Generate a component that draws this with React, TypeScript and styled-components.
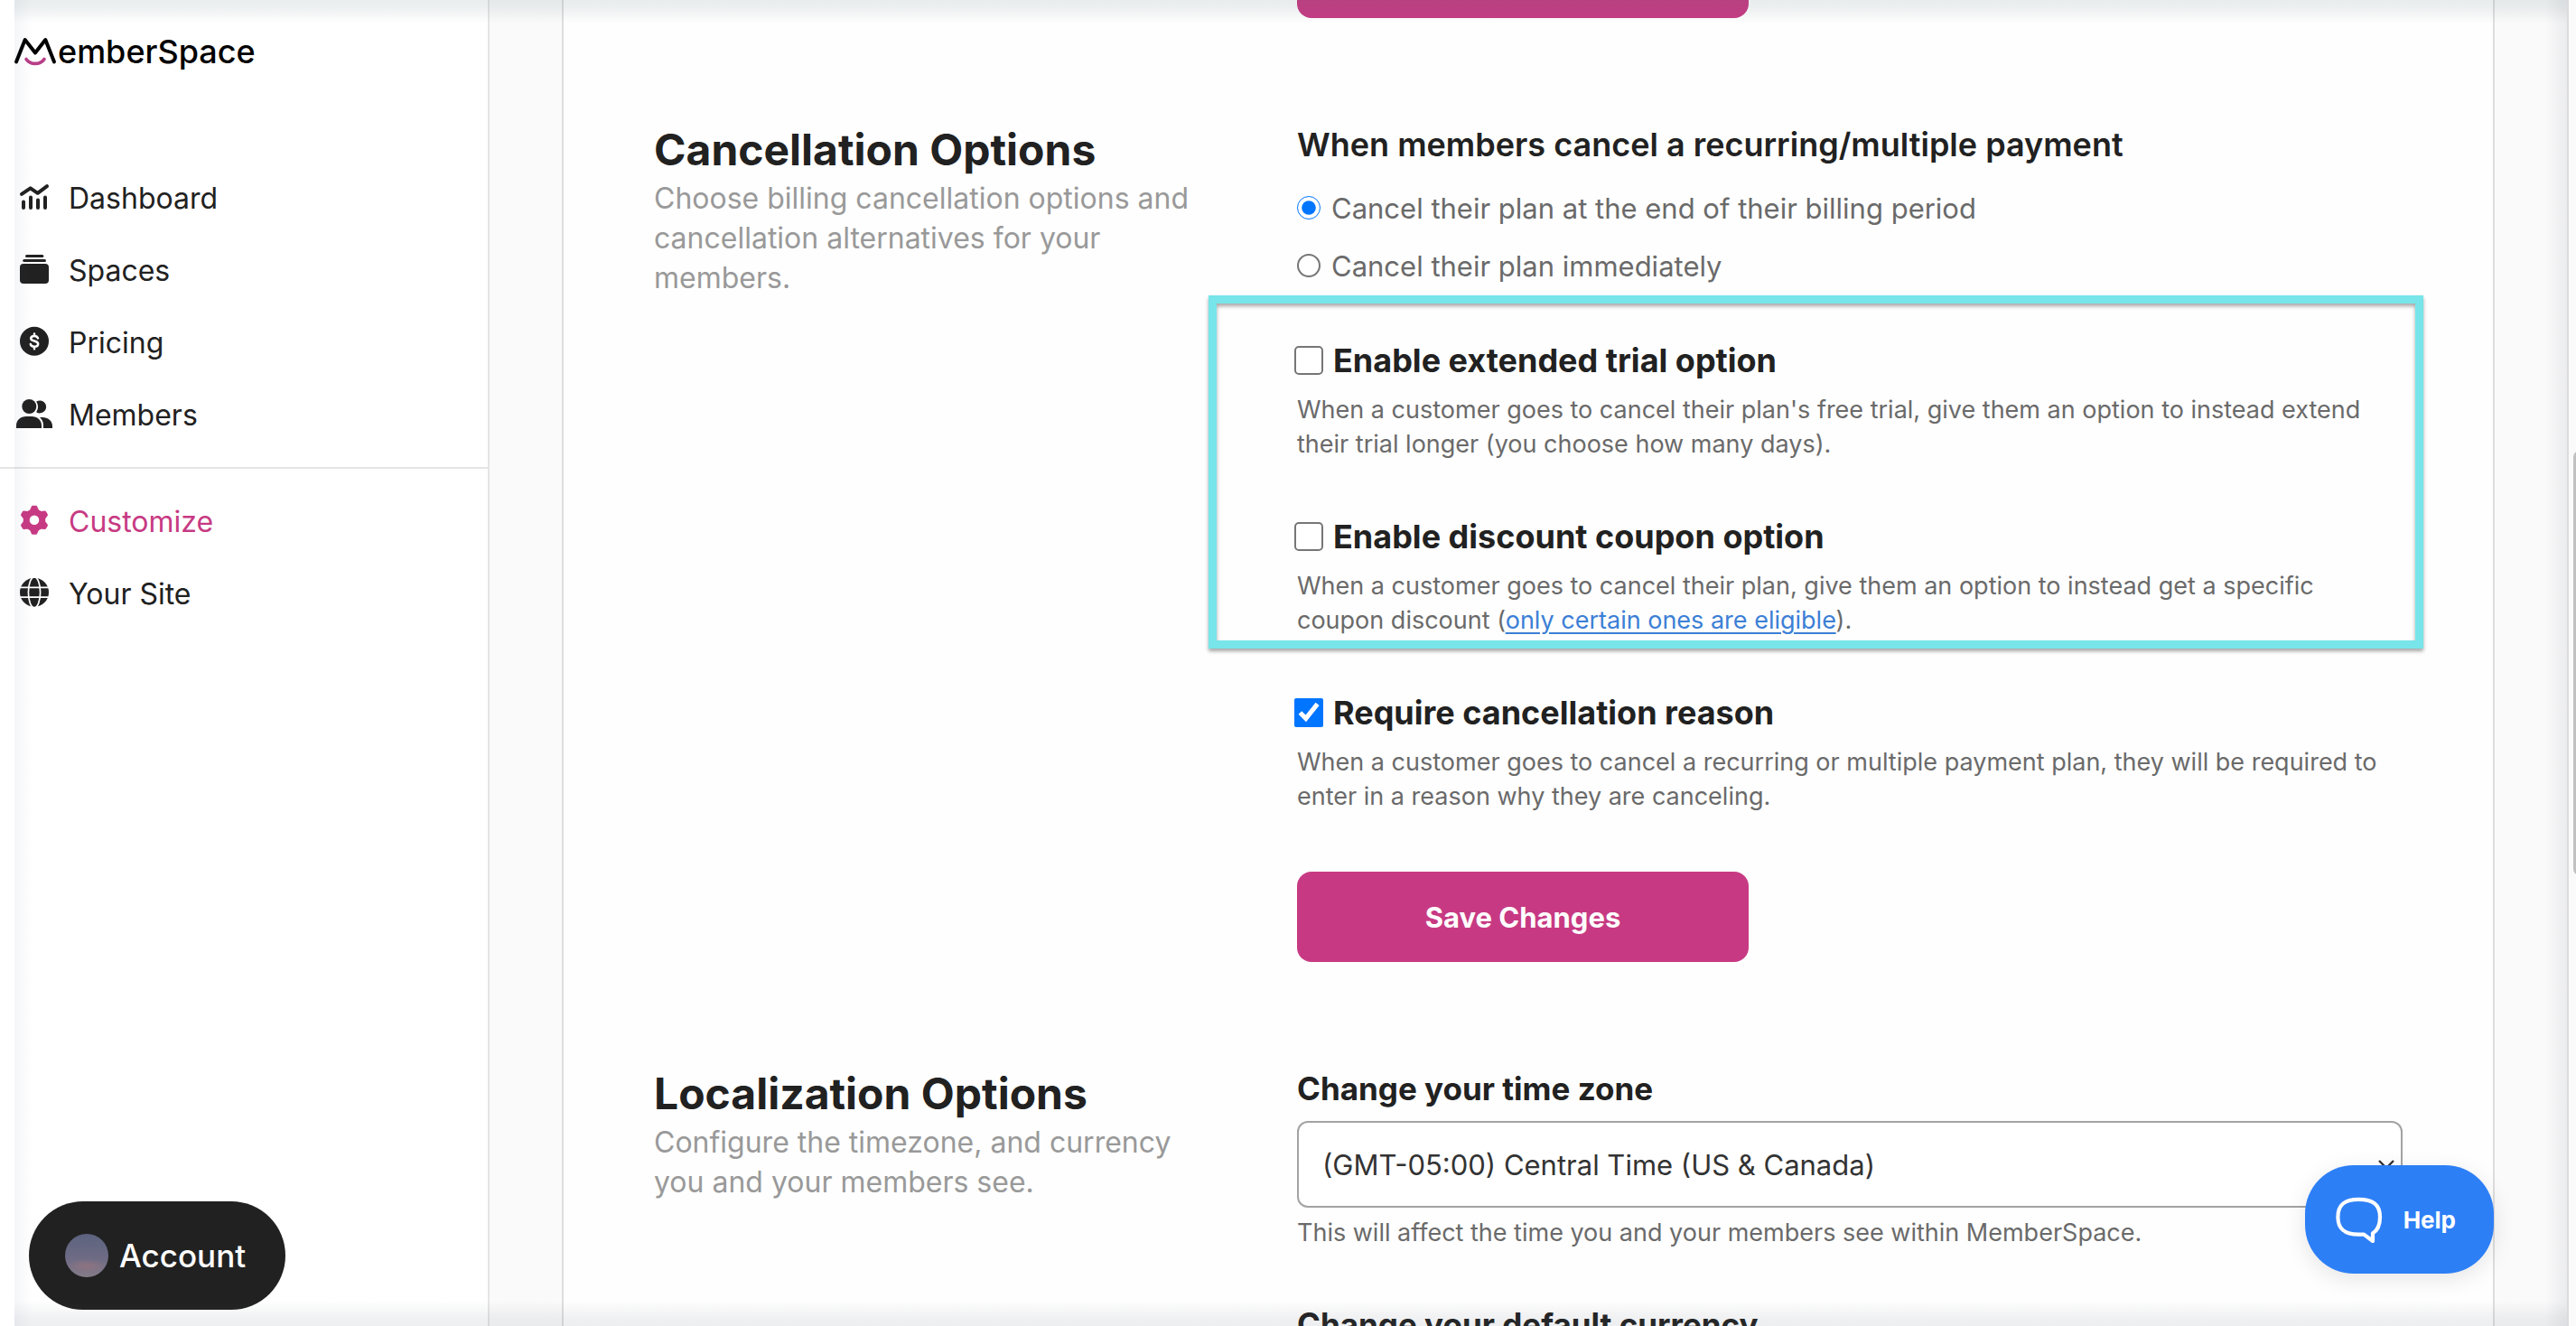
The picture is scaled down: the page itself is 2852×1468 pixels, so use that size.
import React from "react";
import styled, { createGlobalStyle } from "styled-components";

const INK = "#212121";
const PINK = "#c73a83";
const GREY = "#6a6a6a";

const GlobalStyle = createGlobalStyle`
  *, *::before, *::after { box-sizing: border-box; }
  body { margin: 0; background: #fff; }
  body, button, input, select { font-family: Inter, "Liberation Sans", sans-serif; }
  h2, p { margin: 0; }
`;

const Page = styled.div`
  position: relative;
  display: flex;
  height: 100vh;
  overflow: hidden;
  color: ${INK};
`;

const Sidebar = styled.aside`
  display: flex;
  flex-direction: column;
  flex: none;
  width: 542px;
  padding-bottom: 18px;
  border-right: 2px solid #e5e5e5;
  background: #fff;
`;

const Logo = styled.a`
  display: flex;
  align-items: center;
  gap: 1px;
  height: 114px;
  margin-bottom: 65px;
  padding-left: 15px;
  color: #000;
  font-size: 36px;
  font-weight: 500;
  text-decoration: none;
`;

const NavGroup = styled.ul<{ $ruled?: boolean }>`
  margin: 0;
  padding: 18px 0;
  list-style: none;
  ${(p) => (p.$ruled ? "padding-top: 0; border-bottom: 2px solid #e5e5e5;" : "")}
`;

const NavLink = styled.a<{ $active?: boolean }>`
  display: flex;
  align-items: center;
  gap: 18px;
  height: 80px;
  padding-left: 18px;
  color: ${(p) => (p.$active ? PINK : INK)};
  font-size: 32px;
  text-decoration: none;
`;

const AccountButton = styled.button`
  display: flex;
  align-items: center;
  gap: 12px;
  align-self: flex-start;
  height: 120px;
  margin: auto 0 0 32px;
  padding: 0 44px 0 40px;
  border: 0;
  border-radius: 60px;
  background: ${INK};
  color: #fff;
  font-size: 35px;
  font-weight: 500;
  cursor: pointer;
`;

const Avatar = styled.span`
  width: 48px;
  height: 48px;
  border-radius: 50%;
  background: radial-gradient(ellipse 22px 8px at 50% 74%, #8f7381, transparent),
    linear-gradient(#5c637f, #6f6c85 60%, #857c88);
`;

const Main = styled.main`
  flex: 1;
  min-width: 0;
  padding: 0 80px;
  background: #fafafa;
  overflow: hidden;
`;

const Card = styled.div`
  display: flex;
  flex-direction: column;
  gap: 114px;
  min-height: 100%;
  margin-top: -80px;
  padding: 0 100px;
  border: solid #dedede;
  border-width: 0 2px;
  background: #fefefe;
`;

const Section = styled.section`
  display: grid;
  grid-template-columns: 1fr 2fr;
  gap: 100px;
`;

const Title = styled.h2`
  font-size: 48px;
  font-weight: 700;
  line-height: 64px;
`;

const Intro = styled.p`
  color: #999;
  font-size: 32px;
  line-height: 44px;
`;

const Fields = styled.div`
  display: flex;
  flex-direction: column;
  grid-column: 2;
`;

const RadioGroup = styled.fieldset`
  margin: 0;
  padding: 0;
  border: 0;
`;

const Legend = styled.legend`
  margin-bottom: 12px;
  padding: 0;
  font-size: 36px;
  font-weight: 600;
  line-height: 52px;
`;

const RadioLabel = styled.label`
  display: flex;
  align-items: center;
  gap: 12px;
  height: 64px;
  color: ${GREY};
  font-size: 31px;
`;

const Radio = styled.input`
  width: 26px;
  height: 26px;
  margin: 0;
  border: 2px solid #767676;
  border-radius: 50%;
  background: #fff;
  accent-color: #0075ff;
  appearance: none;

  &:checked { appearance: auto; }
`;

const Toggles = styled.div`
  display: flex;
  flex-direction: column;
  gap: 59px;
  margin: 49px 0 64px;
`;

const Highlighted = styled.div`
  position: relative;
  display: flex;
  flex-direction: column;
  gap: 59px;

  &::after {
    content: "";
    position: absolute;
    inset: -48px -23px -12px -98px;
    border: 9px solid #77e5ea;
    box-shadow: 0 3px 4px rgba(0, 0, 0, 0.35), inset 0 3px 4px rgba(0, 0, 0, 0.35);
    pointer-events: none;
  }
`;

const CheckLabel = styled.label`
  display: flex;
  align-items: center;
  gap: 11px;
  height: 48px;
  margin: 0 0 12px -3px;
  font-size: 36px;
  font-weight: 700;
`;

const Checkbox = styled.input`
  width: 32px;
  height: 32px;
  margin: 0;
  border: 2px solid #767676;
  border-radius: 5px;
  background: #fff;
  accent-color: #0075ff;
  appearance: none;

  &:checked { appearance: auto; }
`;

const HelpText = styled.p`
  color: ${GREY};
  font-size: 27px;
  line-height: 38px;

  a {
    color: #3c7fd6;
    text-underline-offset: 4px;
  }
`;

const SaveButton = styled.button`
  width: 500px;
  height: 100px;
  border: 0;
  border-radius: 16px;
  background: ${PINK};
  color: #fff;
  font-size: 31px;
  font-weight: 700;
  cursor: pointer;
`;

const FieldLabel = styled.label`
  font-size: 35px;
  font-weight: 700;
  line-height: 52px;
`;

const SelectBox = styled.div`
  display: grid;
  align-items: center;
  margin: 10px 0 9px;

  select, svg { grid-area: 1 / 1; }
  svg { justify-self: end; margin-right: 8px; pointer-events: none; }
`;

const Select = styled.select`
  width: 100%;
  height: 96px;
  padding: 0 50px 0 26px;
  border: 2px solid #a3a3a3;
  border-radius: 12px;
  background: #fff;
  color: #333;
  font-size: 31px;
  appearance: none;
`;

const NextField = styled.div`
  margin-top: 56px;
`;

const ScrollTrack = styled.div`
  position: relative;
  flex: none;
  width: 10px;
  border-left: 2px solid #dcdcde;
  background: #fafafa;
  overflow: hidden;

  &::after {
    content: "";
    position: absolute;
    top: 34%;
    left: 5px;
    width: 14px;
    height: 32%;
    border-radius: 7px;
    background: #c1c1c1;
  }
`;

const EdgeShade = styled.div`
  position: absolute;
  inset: 0 10px 0 16px;
  background:
    linear-gradient(rgba(80, 110, 115, 0.12), rgba(80, 110, 115, 0.1) 8px, transparent) top / 100% 26px no-repeat,
    linear-gradient(to top, rgba(80, 100, 110, 0.1), rgba(85, 90, 110, 0.08) 10px, transparent) bottom / 100% 28px no-repeat,
    linear-gradient(to right, rgba(90, 100, 150, 0.06), transparent) left / 20px 100% no-repeat,
    linear-gradient(to left, rgba(70, 75, 100, 0.08), rgba(70, 75, 100, 0.06) 8px, transparent) right / 24px 100% no-repeat;
  pointer-events: none;
`;

const HelpButton = styled.button`
  position: absolute;
  right: 91px;
  bottom: 58px;
  display: flex;
  align-items: center;
  gap: 23px;
  height: 120px;
  padding: 0 42px 0 34px;
  border: 0;
  border-radius: 54px;
  background: #2d7ff6;
  box-shadow: 0 6px 24px rgba(0, 0, 0, 0.1);
  color: #fff;
  font-size: 26px;
  font-weight: 700;
  cursor: pointer;
`;

const Icon = ({ children }: { children: React.ReactNode }) => (
  <svg width="40" height="40" viewBox="0 0 40 40" fill="currentColor" aria-hidden="true">
    {children}
  </svg>
);

const DashboardIcon = () => (
  <Icon>
    <g fill="none" stroke="currentColor" strokeWidth="4" strokeLinecap="round" strokeLinejoin="round">
      <path d="M6 15.8 15.7 9.4 23.7 14.8 34 7.2" />
      <path d="M8 24.6V31M16 19.4V31M24 22.6V31M32 19.4V31" />
    </g>
  </Icon>
);

const SpacesIcon = () => (
  <Icon>
    <rect x="10" y="3" width="20.4" height="3" rx="1.5" />
    <rect x="7.2" y="8" width="25.8" height="3" rx="1.5" />
    <rect x="4" y="13" width="32" height="22" rx="4" />
  </Icon>
);

const PricingIcon = () => (
  <Icon>
    <circle cx="20" cy="18.8" r="16" />
    <path
      d="M24 15.4C23.4 13.6 21.9 12.9 20 12.9C17.8 12.9 16.2 13.9 16.2 15.7C16.2 19.6 24.2 17.4 24.2 21.8C24.2 23.7 22.4 24.8 20 24.8C17.8 24.8 16.2 23.9 15.8 22M20 10.6V13M20 24.8V27.2"
      fill="none"
      stroke="#fff"
      strokeWidth="2.5"
      strokeLinecap="round"
    />
  </Icon>
);

const MembersIcon = () => (
  <Icon>
    <circle cx="14.3" cy="11" r="8" />
    <path d="M22.2 5.6A7 7 0 1 1 22.2 17.2 10.4 10.4 0 0 0 22.2 5.6Z" />
    <path d="M0 35V32C0 26 5 22 11 22H17C23 22 28 26 28 32V35Z" />
    <path d="M30 35V31.6C30 28 28.4 25 26 23H29C35 23 40 27 40 32.6V35Z" />
  </Icon>
);

const GearIcon = () => (
  <Icon>
    <circle cx="20" cy="18.8" r="8.8" fill="none" stroke="currentColor" strokeWidth="7" />
    {[0, 60, 120, 180, 240, 300].map((angle) => (
      <path key={angle} d="M14.6 9 16.8 3.8Q17.2 2.8 18.2 2.8H21.8Q22.8 2.8 23.2 3.8L25.4 9Z" transform={`rotate(${angle} 20 18.8)`} />
    ))}
  </Icon>
);

const GlobeIcon = () => (
  <Icon>
    <circle cx="20" cy="18.8" r="16" />
    <g fill="none" stroke="#fff" strokeWidth="1.7">
      <ellipse cx="20" cy="18.8" rx="6.6" ry="17" />
      <path d="M3 13.4H37M3 24.2H37" />
    </g>
  </Icon>
);

const LogoMark = () => (
  <svg width="48" height="36" viewBox="0 0 48 36" fill="none" aria-hidden="true">
    <path d="M3 29.4 12.7 5 24 19.4 35.3 5 45 29.4" stroke="#000" strokeWidth="4" strokeLinejoin="round" strokeLinecap="round" />
    <path d="M14 26.4C18.4 33 29.6 33 34 26.4" stroke="#b83e87" strokeWidth="3.6" strokeLinecap="round" />
  </svg>
);

const ChatIcon = () => (
  <svg width="52" height="52" viewBox="0 0 52 52" fill="none" aria-hidden="true">
    <path
      d="M25.5 3.8C10 3.8 2.4 9.4 2.4 23.2C2.4 37 10 42.6 25.5 42.6H31.2L41 50V41.2C46.6 38 49 32.4 49 23.2C49 9.4 41 3.8 25.5 3.8Z"
      stroke="#fff"
      strokeWidth="4.2"
      strokeLinejoin="round"
    />
  </svg>
);

const primaryNav = [
  { label: "Dashboard", icon: <DashboardIcon /> },
  { label: "Spaces", icon: <SpacesIcon /> },
  { label: "Pricing", icon: <PricingIcon /> },
  { label: "Members", icon: <MembersIcon /> },
];

const secondaryNav = [
  { label: "Customize", icon: <GearIcon />, active: true },
  { label: "Your Site", icon: <GlobeIcon /> },
];

type NavItem = { label: string; icon: React.ReactNode; active?: boolean };

const Nav = ({ items, ruled }: { items: NavItem[]; ruled?: boolean }) => (
  <NavGroup $ruled={ruled}>
    {items.map((item) => (
      <li key={item.label}>
        <NavLink href="#" $active={item.active}>
          {item.icon}
          {item.label}
        </NavLink>
      </li>
    ))}
  </NavGroup>
);

const Toggle = ({ id, label, checked, children }: { id: string; label: string; checked?: boolean; children: React.ReactNode }) => (
  <div>
    <CheckLabel htmlFor={id}>
      <Checkbox id={id} type="checkbox" defaultChecked={checked} />
      {label}
    </CheckLabel>
    <HelpText>{children}</HelpText>
  </div>
);

export default function App() {
  return (
    <Page>
      <GlobalStyle />
      <Sidebar>
        <Logo href="#">
          <LogoMark />
          emberSpace
        </Logo>
        <nav>
          <Nav items={primaryNav} ruled />
          <Nav items={secondaryNav} />
        </nav>
        <AccountButton>
          <Avatar />
          Account
        </AccountButton>
      </Sidebar>

      <Main>
        <Card>
          <Section>
            <Fields>
              <SaveButton aria-label="Save" />
            </Fields>
          </Section>

          <Section>
            <div>
              <Title>Cancellation Options</Title>
              <Intro>Choose billing cancellation options and cancellation alternatives for your members.</Intro>
            </div>
            <Fields>
              <RadioGroup>
                <Legend>When members cancel a recurring/multiple payment</Legend>
                <RadioLabel>
                  <Radio type="radio" name="cancel" defaultChecked />
                  Cancel their plan at the end of their billing period
                </RadioLabel>
                <RadioLabel>
                  <Radio type="radio" name="cancel" />
                  Cancel their plan immediately
                </RadioLabel>
              </RadioGroup>
              <Toggles>
                <Highlighted>
                  <Toggle id="trial" label="Enable extended trial option">
                    When a customer goes to cancel their plan's free trial, give them an option to instead extend
                    <br />
                    their trial longer (you choose how many days).
                  </Toggle>
                  <Toggle id="coupon" label="Enable discount coupon option">
                    When a customer goes to cancel their plan, give them an option to instead get a specific
                    <br />
                    coupon discount (<a href="#">only certain ones are eligible</a>).
                  </Toggle>
                </Highlighted>
                <Toggle id="reason" label="Require cancellation reason" checked>
                  When a customer goes to cancel a recurring or multiple payment plan, they will be required to
                  <br />
                  enter in a reason why they are canceling.
                </Toggle>
              </Toggles>
              <SaveButton>Save Changes</SaveButton>
            </Fields>
          </Section>

          <Section>
            <div>
              <Title>Localization Options</Title>
              <Intro>
                Configure the timezone, and currency
                <br />
                you and your members see.
              </Intro>
            </div>
            <Fields>
              <FieldLabel htmlFor="zone">Change your time zone</FieldLabel>
              <SelectBox>
                <Select id="zone">
                  <option>(GMT-05:00) Central Time (US &amp; Canada)</option>
                </Select>
                <svg width="20" height="12" viewBox="0 0 20 12" fill="none" stroke="#333" strokeWidth="2.4" aria-hidden="true">
                  <path d="M2 2 10 10 18 2" />
                </svg>
              </SelectBox>
              <HelpText>This will affect the time you and your members see within MemberSpace.</HelpText>
              <NextField>
                <FieldLabel htmlFor="currency">Change your default currency</FieldLabel>
                <SelectBox>
                  <Select id="currency" />
                </SelectBox>
              </NextField>
            </Fields>
          </Section>
        </Card>
      </Main>

      <ScrollTrack />
      <EdgeShade />
      <HelpButton>
        <ChatIcon />
        Help
      </HelpButton>
    </Page>
  );
}
